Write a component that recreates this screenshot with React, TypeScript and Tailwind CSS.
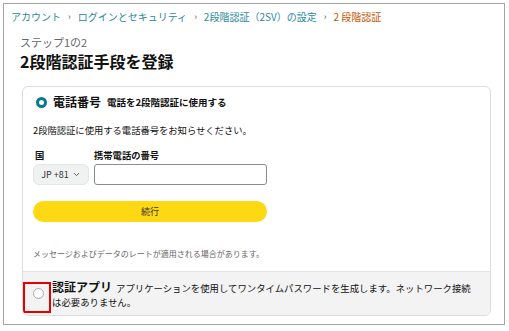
import { ChevronDown } from 'lucide-react'

const font = { fontFamily: '"Noto Sans CJK JP", "Noto Sans", sans-serif' }

function Crumb({ children, last }: { children: React.ReactNode; last?: boolean }) {
  return (
    <>
      <span className={last ? 'text-[#c45500]' : 'text-[#2a8aa0]'}>{children}</span>
      {!last && <span className="mx-[7px] text-[#555] text-[9px]">›</span>}
    </>
  )
}

export default function App() {
  return (
    <div className="w-[509px] h-[331px] bg-white p-[3px]" style={font}>
      <div className="h-[322px] w-[502px] border border-[#a3a3a3] flex flex-col">
        <div className="pl-[7px] pt-[5px] text-[10px] leading-[15px] flex items-center">
          <Crumb>アカウント</Crumb>
          <Crumb>ログインとセキュリティ</Crumb>
          <Crumb>2段階認証（2SV）の設定</Crumb>
          <Crumb last>2 段階認証</Crumb>
        </div>

        <div className="pl-[16px] pt-[10px] text-[11px] leading-[16px] text-[#666]">ステップ1の2</div>
        <h1 className="pl-[16px] text-[16px] leading-[23px] font-bold text-[#111]">2段階認証手段を登録</h1>

        <div className="ml-[18px] mt-[13px] w-[469px] h-[230px] border border-[#dddddd] rounded-[6px] flex flex-col overflow-hidden">
          <div className="flex-1 px-[10px] pt-[6px]">
            <div className="flex items-center gap-[6px] h-[18px]">
              <span className="w-[11px] h-[11px] rounded-full border-[3px] border-[#077b8a] ml-[3px]" />
              <span className="text-[12px] leading-[18px] font-bold text-[#111]">電話番号</span>
              <span className="text-[9.5px] leading-[14px] font-bold text-[#111]">電話を2段階認証に使用する</span>
            </div>
            <div className="mt-[12px] text-[9.3px] leading-[14px] text-[#111]">
              2段階認証に使用する電話番号をお知らせください。
            </div>
            <div className="mt-[11px] flex gap-[5px] text-[9.3px] font-bold text-[#111] leading-[14px]">
              <span className="w-[56px] pl-[2px]">国</span>
              <span>携帯電話の番号</span>
            </div>
            <div className="mt-[2px] flex gap-[5px] h-[21px]">
              <div className="w-[56px] rounded-[6px] bg-[#f0f2f2] border border-[#e3e6e6] flex items-center justify-center gap-[3px] text-[9px] text-[#333]">
                JP +81
                <ChevronDown size={9} strokeWidth={2.5} className="text-[#555]" />
              </div>
              <div className="w-[173px] rounded-[3px] border border-[#888c8c] bg-white" />
            </div>
            <div className="mt-[16px] w-[234px] h-[21px] rounded-full bg-[#ffd814] flex items-center justify-center text-[9px] text-[#333]">
              続行
            </div>
            <div className="mt-[26px] text-[8px] leading-[12px] text-[#666]">
              メッセージおよびデータのレートが適用される場合があります。
            </div>
          </div>
          <div className="h-[44px] bg-[#f3f3f3] border-t border-[#e3e3e3] flex">
            <div className="relative w-[29px] shrink-0">
              <span className="absolute left-[10px] top-[16px] w-[11px] h-[11px] rounded-full border border-[#aaa] bg-white" />
              <span className="absolute left-0 top-[10px] w-[28px] h-[31px] border-2 border-[#e60000]" />
            </div>
            <div className="pt-[6px] pr-[14px] text-[#111] flex flex-col">
              <div className="flex items-baseline gap-[4px] h-[17px]">
                <span className="text-[12px] leading-[17px] font-bold">認証アプリ</span>
                <span className="text-[9.4px] leading-[14px]">
                  アプリケーションを使用してワンタイムパスワードを生成します。ネットワーク接続
                </span>
              </div>
              <div className="text-[9.4px] leading-[14px]">は必要ありません。</div>
            </div>
          </div>
        </div>
      </div>
    </div>
  )
}
